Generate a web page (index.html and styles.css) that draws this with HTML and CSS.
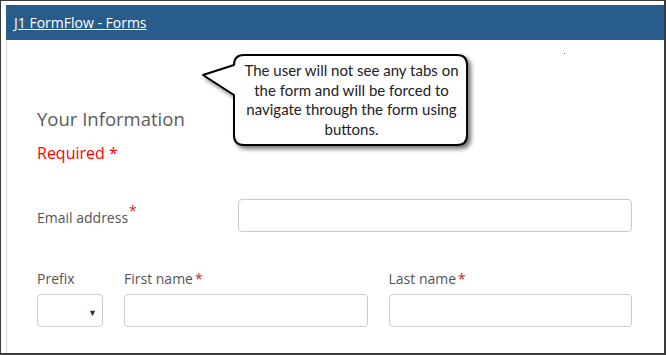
FILE: index.html
```html
<!DOCTYPE html>
<html lang="en">
<head>
    <meta charset="UTF-8">
    <meta name="viewport" content="width=device-width, initial-scale=1.0">
    <title>J1 FormFlow - Forms</title>
    <link rel="stylesheet" href="styles.css">
</head>
<body>
    <div class="frame">
        <div class="panel">
            <div class="header"><a href="#">J1 FormFlow - Forms</a></div>

            <form class="content">
                <h2>Your Information</h2>
                <p class="required">Required *</p>

                <div class="email-row">
                    <label for="email">Email address<sup>*</sup></label>
                    <input type="email" id="email" name="email">
                </div>

                <div class="name-row">
                    <div class="field">
                        <label for="prefix">Prefix</label>
                        <div class="select">
                            <select id="prefix" name="prefix">
                                <option></option>
                            </select>
                            <span class="arrow">&#9660;</span>
                        </div>
                    </div>
                    <div class="field">
                        <label for="first">First name<span class="star">*</span></label>
                        <input type="text" id="first" name="first">
                    </div>
                    <div class="field">
                        <label for="last">Last name<span class="star">*</span></label>
                        <input type="text" id="last" name="last">
                    </div>
                </div>
            </form>
        </div>

        <!-- callout note drawn over the form -->
        <svg class="callout-shape" viewBox="200 51 275 100" width="275" height="100">
            <path d="M244,55 H457 Q467,55 467,65 V135 Q467,145 457,145 H244 Q234,145 234,135 V95 L203,75 L234,65 Q234,55 244,55 Z"
                  fill="#fff" stroke="#000" stroke-width="2" stroke-linejoin="round"/>
        </svg>
        <div class="callout-text">
            The user will not see any tabs on<br>
            the form and will be forced to<br>
            navigate through the form using<br>
            buttons.
        </div>
        <span class="dot"></span>
    </div>
</body>
</html>
```

FILE: styles.css
```css
body {
    margin: 0;
    padding: 0;
    background-color: #fff;
    font-family: "Open Sans", Arial, sans-serif;
}

.frame {
    position: relative;
    width: 666px;
    height: 355px;
    box-sizing: border-box;
    border: solid #3b3b3b;
    border-width: 1px 2px 2px 1px;
    padding: 4px 0 0 5px;
    background-color: #fff;
    overflow: hidden;
}

.panel {
    height: 100%;
    border-left: 1px solid #dcdcdc;
}

.header {
    height: 35px;
    line-height: 35px;
    margin-left: -1px;
    padding-left: 8px;
    background-color: #285c8a;
}

.header a {
    color: #fff;
    font-size: 14px;
    text-decoration: underline;
}

.content {
    padding: 0 32px 0 30px;
    color: #555;
}

h2 {
    margin: 67px 0 0;
    font-size: 18.5px;
    font-weight: normal;
    line-height: 24px;
    color: #5a5a5a;
}

.required {
    margin: 11px 0 0;
    font-size: 16px;
    line-height: 22px;
    color: #f00;
}

label {
    font-size: 14px;
    line-height: 20px;
    color: #555;
}

sup {
    color: #e02020;
    font-size: 14px;
    line-height: 0;
    vertical-align: 7px;
    margin-left: 1px;
}

.star {
    color: #e02020;
    margin-left: 2px;
}

input, select {
    width: 100%;
    height: 33px;
    box-sizing: border-box;
    border: 1px solid #ccc;
    border-radius: 4px;
    background-color: #fff;
    font-size: 14px;
    margin: 0;
}

.email-row {
    display: grid;
    grid-template-columns: 201px 1fr;
    align-items: center;
    margin-top: 35px;
}

.email-row label {
    padding-top: 5px;
}

.name-row {
    display: grid;
    grid-template-columns: 66px 1fr 1fr;
    column-gap: 21px;
    margin-top: 37px;
}

.field {
    display: flex;
    flex-direction: column;
    gap: 5px;
}

.select {
    position: relative;
}

.select select {
    appearance: none;
    -webkit-appearance: none;
}

.arrow {
    position: absolute;
    right: 6px;
    top: 12px;
    font-size: 9px;
    color: #333;
}

/* Callout */
.callout-shape {
    position: absolute;
    left: 199px;
    top: 50px;
    filter: drop-shadow(3px 3px 2px rgba(0, 0, 0, 0.55));
}

.callout-text {
    position: absolute;
    left: 233px;
    top: 54px;
    width: 235px;
    height: 90px;
    display: flex;
    align-items: center;
    justify-content: center;
    text-align: center;
    font-family: Lato, "Liberation Sans", sans-serif;
    font-size: 15px;
    line-height: 19.5px;
    color: #222;
}

.dot {
    position: absolute;
    left: 563px;
    top: 52px;
    width: 1px;
    height: 1px;
    background-color: #3a6fa0;
}
```
